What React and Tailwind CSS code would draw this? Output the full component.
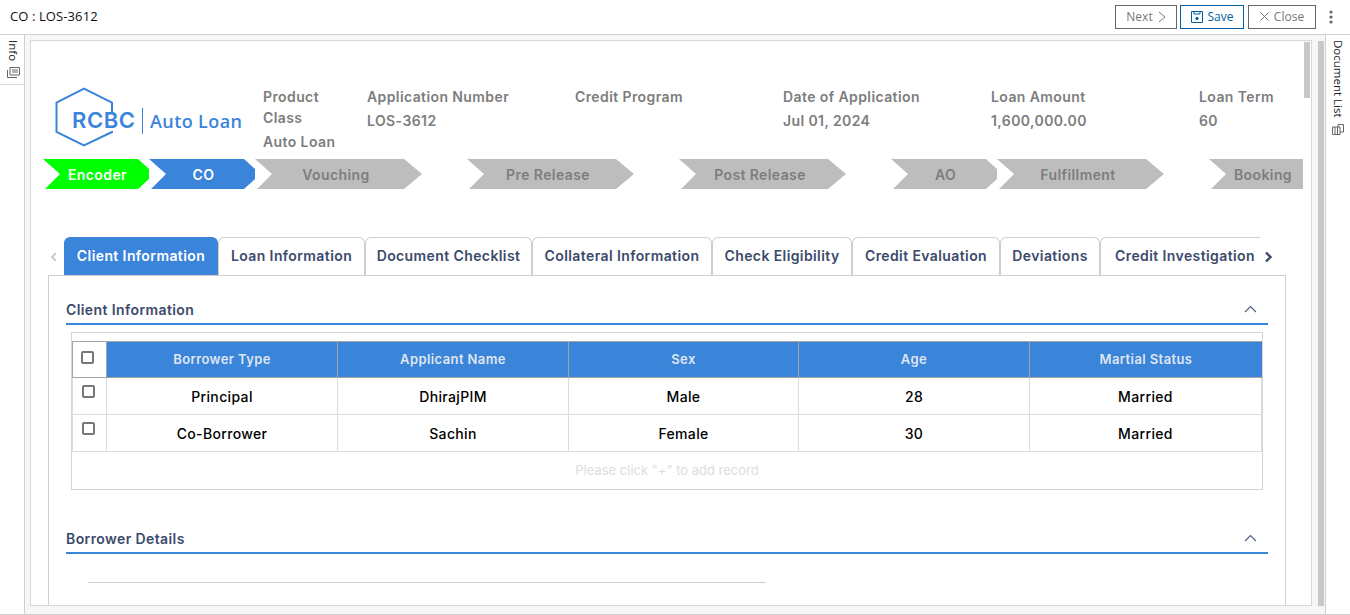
import React from 'react';

const bodyFont = 'font-["Inter","Liberation_Sans",sans-serif]';
const uiFont = 'font-["Open_Sans","Liberation_Sans",sans-serif]';

const headerFields = [
  { label: 'Application Number', value: 'LOS-3612' },
  { label: 'Credit Program', value: '' },
  { label: 'Date of Application', value: 'Jul 01, 2024' },
  { label: 'Loan Amount', value: '1,600,000.00' },
  { label: 'Loan Term', value: '60' },
];

const tabs = [
  { name: 'Client Information', width: 'w-[154px]', active: true },
  { name: 'Loan Information', width: 'w-[147px]' },
  { name: 'Document Checklist', width: 'w-[167px]' },
  { name: 'Collateral Information', width: 'w-[180px]' },
  { name: 'Check Eligibility', width: 'w-[140px]' },
  { name: 'Credit Evaluation', width: 'w-[148px]' },
  { name: 'Deviations', width: 'w-[100px]' },
  { name: 'Credit Investigation', width: 'w-[170px]' },
];

const rows = [
  ['Principal', 'DhirajPIM', 'Male', '28', 'Married'],
  ['Co-Borrower', 'Sachin', 'Female', '30', 'Married'],
];

const tableCols = 'grid grid-cols-[35px_231px_231px_230px_231px_232px]';

function Step({ label, className, textClass = 'text-[#7d7d7d]' }) {
  return (
    <div className={`h-[30px] shrink-0 flex items-center justify-center text-[14px] font-semibold tracking-[0.4px] ${textClass} ${className}`}>
      {label}
    </div>
  );
}

function SectionHead({ title }) {
  return (
    <div className="h-[28px] flex items-center justify-between border-b-2 border-[#3a84da] pr-[11px] pt-[1px] pb-[2px]">
      <span className="text-[14px] font-semibold tracking-[0.4px] text-[#3b4a6b]">{title}</span>
      <svg width="13" height="8" viewBox="0 0 13 8" fill="none" stroke="#4a5a7c" strokeWidth="1.1" className="-mt-[1px]">
        <path d="M1 7 L6.5 1.5 L12 7" />
      </svg>
    </div>
  );
}

function Checkbox() {
  return <span className="block w-[13px] h-[13px] rounded-[2px] border-2 border-[#777] bg-white" />;
}

function Logo() {
  return (
    <svg width="190" height="62" viewBox="0 0 190 62" className="block">
      <path
        d="M57 25 V15.5 L29 1.5 L1.5 15.5 V45 L29 58.5 L57 45 V44"
        fill="none"
        stroke="#3a84da"
        strokeWidth="2"
      />
      <text x="17" y="41" fill="#3a84da" fontFamily="Inter, sans-serif" fontWeight="600" fontSize="22" letterSpacing="0.6">
        RCBC
      </text>
      <rect x="87" y="21" width="1" height="26" fill="#3a84da" />
      <text x="95" y="41" fill="#3a84da" fontFamily="Open Sans, sans-serif" fontSize="18">
        Auto Loan
      </text>
    </svg>
  );
}

export default function App() {
  return (
    <div className={`h-screen w-full overflow-hidden bg-white flex flex-col ${bodyFont}`}>
      {/* top bar */}
      <div className={`h-[35px] shrink-0 flex items-center border-b border-[#d0d0d0] pl-[10px] pr-[17px] pb-[1px] ${uiFont}`}>
        <span className="text-[13px] font-normal tracking-[0.1px] text-[#111]">CO : LOS-3612</span>
        <div className="ml-auto flex items-center text-[12px] text-[#777]">
          <button className="w-[62px] h-[24px] border border-[#666] flex items-center justify-center gap-[5px]">
            Next
            <svg width="8" height="12" viewBox="0 0 8 12" fill="none" stroke="#777" strokeWidth="1">
              <path d="M1 1 L7 6 L1 11" />
            </svg>
          </button>
          <button className="ml-[3px] w-[64px] h-[24px] border border-[#00609f] flex items-center justify-center gap-[5px] text-[#00609f]">
            <svg width="12" height="12" viewBox="0 0 12 12" fill="none" stroke="#00609f" strokeWidth="1">
              <path d="M.5 .5 H11.5 V11.5 H.5 Z M3 .5 V3 H9 V.5" />
              <circle cx="6" cy="7.5" r="1.2" fill="#00609f" />
            </svg>
            Save
          </button>
          <button className="ml-[4px] w-[68px] h-[24px] border border-[#666] flex items-center justify-center gap-[5px]">
            <svg width="9" height="9" viewBox="0 0 9 9" fill="none" stroke="#777" strokeWidth="1">
              <path d="M.5 .5 L8.5 8.5 M8.5 .5 L.5 8.5" />
            </svg>
            Close
          </button>
          <svg width="4" height="14" viewBox="0 0 4 14" fill="#666" className="ml-[13px]">
            <circle cx="2" cy="2" r="1.6" />
            <circle cx="2" cy="7" r="1.6" />
            <circle cx="2" cy="12" r="1.6" />
          </svg>
        </div>
      </div>

      <div className="flex-1 min-h-0 flex border-b border-[#d0d0d0]">
        {/* left rail */}
        <div className={`w-[25px] shrink-0 border-r border-[#cfcfcf] ${uiFont}`}>
          <div className="h-[50px] border-b border-[#dcdcdc] flex flex-col items-center pt-[5px] pl-[2px]">
            <span className="[writing-mode:vertical-rl] text-[11.5px] leading-[14px] text-[#222]">Info</span>
            <svg width="13" height="11" viewBox="0 0 13 11" fill="none" stroke="#666" strokeWidth="1" className="mt-[6px]">
              <path d="M3 .5 H12.5 V8 H3 Z M.5 3 V10.5 H10 M5 3 H11 M5 5 H11" />
            </svg>
          </div>
        </div>

        {/* main area */}
        <div className="flex-1 min-w-0 bg-[#f5f6f8] flex pl-[5px] pt-[5px] pb-[8px]">
          <div className="w-[1282px] shrink-0 bg-white border border-[#d8d8d8] flex overflow-hidden">
            <div className="w-[1272px] shrink-0 overflow-hidden">
              {/* header */}
              <div className="h-[73px] mt-[45px] flex pl-[24px] text-[14px] font-semibold tracking-[0.4px] leading-[21px] text-[#7d7d7d]">
                <div className="w-[208px] shrink-0 pt-[1px]">
                  <Logo />
                </div>
                <div className="w-[104px] shrink-0 pr-[30px]">
                  <div>Product Class</div>
                  <div className="mt-[3px]">Auto Loan</div>
                </div>
                {headerFields.map((f) => (
                  <div key={f.label} className="w-[208px] shrink-0">
                    <div>{f.label}</div>
                    <div className="mt-[3px]">{f.value}</div>
                  </div>
                ))}
              </div>

              {/* stepper */}
              <div className="flex pl-[12px]">
                <Step label="Encoder" textClass="text-white" className="w-[106px] pl-[3px] bg-[#00ff00] [clip-path:polygon(0_0,95px_0,106px_10px,106px_20px,95px_30px,2px_30px,17px_15px)]" />
                <Step label="CO" textClass="text-white" className="w-[106px] pl-[3px] bg-[#3a84da] [clip-path:polygon(0_0,95px_0,106px_10px,106px_20px,95px_30px,2px_30px,17px_15px)]" />
                <Step label="Vouching" className="w-[167px] pr-[5px] bg-[#bdbdbd] [clip-path:polygon(0_0,149px_0,167px_15px,149px_30px,2px_30px,17px_15px)]" />
                <Step label="Pre Release" className="ml-[45px] w-[167px] pr-[5px] bg-[#bdbdbd] [clip-path:polygon(0_0,149px_0,167px_15px,149px_30px,2px_30px,17px_15px)]" />
                <Step label="Post Release" className="ml-[45px] w-[167px] pr-[5px] bg-[#bdbdbd] [clip-path:polygon(0_0,149px_0,167px_15px,149px_30px,2px_30px,17px_15px)]" />
                <Step label="AO" className="ml-[45px] w-[106px] pl-[3px] bg-[#bdbdbd] [clip-path:polygon(0_0,95px_0,106px_10px,106px_20px,95px_30px,2px_30px,17px_15px)]" />
                <Step label="Fulfillment" className="w-[167px] pr-[5px] bg-[#bdbdbd] [clip-path:polygon(0_0,149px_0,167px_15px,149px_30px,2px_30px,17px_15px)]" />
                <Step label="Booking" className="ml-[45px] w-[94px] pl-[14px] bg-[#bdbdbd] [clip-path:polygon(0_0,94px_0,94px_30px,2px_30px,17px_15px)]" />
              </div>

              {/* tabs */}
              <div className="mt-[48px] h-[38px] flex items-center pl-[19px]">
                <svg width="8" height="10" viewBox="0 0 8 10" fill="none" stroke="#c5ccd6" strokeWidth="2" className="mr-[6px] mt-[2px] shrink-0">
                  <path d="M6 1 L2 5 L6 9" />
                </svg>
                <div className="w-[1196px] h-[38px] flex overflow-hidden shrink-0 text-[14px] font-semibold tracking-[0.4px]">
                  {tabs.map((t) =>
                    t.active ? (
                      <div key={t.name} className={`${t.width} shrink-0 rounded-t-[6px] bg-[#3a84da] text-white flex items-center justify-center pb-[2px]`}>
                        {t.name}
                      </div>
                    ) : (
                      <div key={t.name} className={`${t.width} shrink-0 rounded-t-[6px] border border-b-0 border-[#cfcfcf] text-[#3b4a6b] flex items-center justify-center pb-[2px] whitespace-nowrap`}>
                        {t.name}
                      </div>
                    )
                  )}
                </div>
                <svg width="9" height="12" viewBox="0 0 9 12" fill="none" stroke="#3b4a6b" strokeWidth="2.4" className="ml-[4px] mt-[2px] shrink-0">
                  <path d="M2 1.5 L6.5 6 L2 10.5" />
                </svg>
              </div>

              {/* tab panel */}
              <div className="ml-[17px] w-[1238px] h-[340px] border border-[#cfcfcf] px-[17px] pt-[21px]">
                <SectionHead title="Client Information" />

                <div className="mt-[7px] mx-[5px] border border-[#d4d4d4] pt-[8px]">
                  <div className={`${tableCols} h-[37px] border-y border-[#a3a3a3]`}>
                    <div className="border-x border-[#a3a3a3] pt-[9px] pl-[8px]">
                      <Checkbox />
                    </div>
                    {['Borrower Type', 'Applicant Name', 'Sex', 'Age', 'Martial Status'].map((h, i) => (
                      <div key={h} className={`bg-[#3a84da] text-[#dfe6f0] text-[13px] font-semibold tracking-[0.4px] flex items-center justify-center ${i < 4 ? 'border-r border-[#a3a3a3]' : ''}`}>
                        {h}
                      </div>
                    ))}
                  </div>
                  {rows.map((r) => (
                    <div key={r[0]} className={`${tableCols} h-[37px] border-b border-[#dcdcdc]`}>
                      <div className="border-x border-[#dcdcdc] pt-[7px] pl-[9px]">
                        <Checkbox />
                      </div>
                      {r.map((c, i) => (
                        <div key={i} className="border-r border-[#dcdcdc] text-black text-[14px] font-medium tracking-[0.35px] flex items-center justify-center">
                          {c}
                        </div>
                      ))}
                    </div>
                  ))}
                  <div className="h-[37px] flex items-center justify-center text-[13px] text-[#dddddd] pt-[1px]">
                    Please click "+" to add record
                  </div>
                </div>

                <div className="mt-[36px]">
                  <SectionHead title="Borrower Details" />
                </div>
                <div className="mt-[28px] ml-[22px] w-[678px] h-px bg-[#cfcfcf]" />
              </div>
            </div>

            {/* inner scrollbar */}
            <div className="ml-[1px] pt-[1px] w-[6px] shrink-0">
              <div className="w-[6px] h-[56px] bg-[#c8c8c8]" />
            </div>
          </div>

          {/* outer scrollbar */}
          <div className="ml-[6px] mt-px w-[6px] shrink-0 bg-[#c8c8c8]" />
        </div>

        {/* right rail */}
        <div className={`w-[25px] shrink-0 border-l border-[#cfcfcf] flex flex-col items-center pt-[5px] ${uiFont}`}>
          <span className="[writing-mode:vertical-rl] text-[11.5px] leading-[14px] text-[#222]">Document List</span>
          <svg width="12" height="11" viewBox="0 0 12 11" fill="none" stroke="#666" strokeWidth="1" className="mt-[6px]">
            <path d="M.5 3 H8 V10.5 H.5 Z M3 3 V10.5 M5.5 3 V10.5 M6 3 V.5 H11.5 V8 H8" />
          </svg>
        </div>
      </div>
    </div>
  );
}
